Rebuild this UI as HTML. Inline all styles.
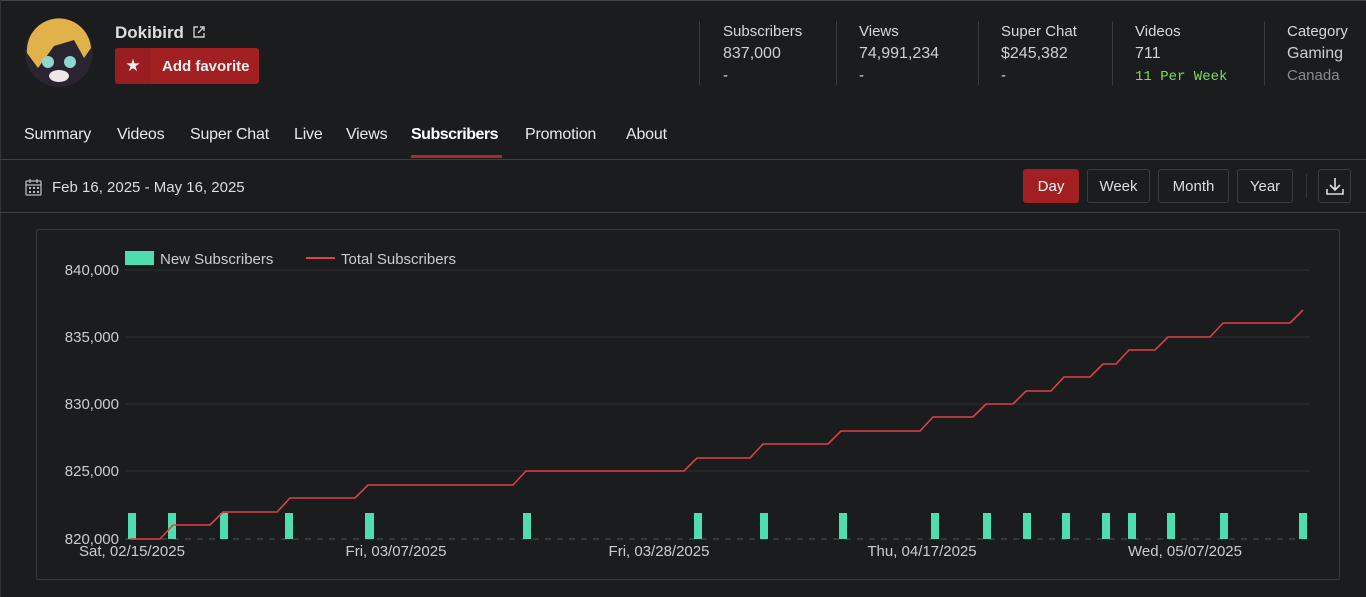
<!DOCTYPE html>
<html><head><meta charset="utf-8"><style>
*{margin:0;padding:0;box-sizing:border-box}
body{width:1366px;height:597px;background:#1b1c1e;font-family:"Liberation Sans",sans-serif;color:#e6e6e6;position:relative;overflow:hidden}
.a{position:absolute}
.stat{position:absolute;top:21px;font-size:15px;line-height:22px;color:#d8d8d8}
.stat .v{color:#cfcfcf;font-size:16px}
.sep{position:absolute;top:21px;width:1px;height:64px;background:#3a3b3d}
.tab{position:absolute;top:126px;font-size:16px;color:#e8e8e8;letter-spacing:-0.2px}
.btn{position:absolute;top:169px;height:34px;border:1px solid #3b3c3f;border-radius:3px;font-size:15px;line-height:34px;text-align:center;color:#ddd}
</style></head><body>
<div class="a" style="left:0;top:0;width:1366px;height:1px;background:#444"></div>
<div class="a" style="left:0;top:0;width:1px;height:597px;background:#333"></div>
<svg class="a" style="left:24px;top:18px" width="70" height="70"><circle cx="35" cy="35" r="34" fill="#2a2430"/><path d="M3 35 A32 32 0 0 1 67 30 L60 40 L50 22 L30 28 L14 50 Z" fill="#e2b24a"/><circle cx="24" cy="44" r="6" fill="#8fd6cf"/><circle cx="46" cy="44" r="6" fill="#8fd6cf"/><ellipse cx="35" cy="58" rx="10" ry="6" fill="#f0e6e6"/></svg>
<div class="a" style="left:115px;top:23px;font-size:17px;font-weight:bold;color:#ddd">Dokibird</div>
<svg class="a" style="left:192px;top:25px" width="14" height="14" fill="none" stroke="#ccc" stroke-width="1.4"><path d="M6 2H2v10h10V8M8 2h4v4M12 2L6 8"/></svg>
<div class="a" style="left:115px;top:48px;width:144px;height:36px;background:#a21f22;border-radius:3px"></div>
<div class="a" style="left:115px;top:48px;width:36px;height:36px;background:#9a1e21;border-radius:3px 0 0 3px;color:#eee;font-size:17px;text-align:center;line-height:36px">★</div>
<div class="a" style="left:162px;top:58px;font-size:15px;font-weight:bold;color:#f0f0f0">Add favorite</div>
<div class="sep" style="left:699px"></div><div class="sep" style="left:836px"></div><div class="sep" style="left:978px"></div><div class="sep" style="left:1112px"></div><div class="sep" style="left:1264px"></div>
<div class="stat" style="left:723px">Subscribers<br><span class="v">837,000</span><br>-</div>
<div class="stat" style="left:859px">Views<br><span class="v">74,991,234</span><br>-</div>
<div class="stat" style="left:1001px">Super Chat<br><span class="v">$245,382</span><br>-</div>
<div class="stat" style="left:1135px">Videos<br><span class="v">711</span><br><span style="font-family:'Liberation Mono',monospace;font-size:14px;color:#7bdc5a">11 Per Week</span></div>
<div class="stat" style="left:1287px">Category<br><span class="v">Gaming</span><br><span style="color:#8a8a8a;font-size:15px">Canada</span></div>
<div class="tab" style="left:24px">Summary</div><div class="tab" style="left:117px">Videos</div><div class="tab" style="left:190px">Super Chat</div><div class="tab" style="left:294px">Live</div><div class="tab" style="left:346px">Views</div><div class="tab" style="left:411px;font-weight:bold;color:#fff;letter-spacing:-0.5px">Subscribers</div><div class="tab" style="left:525px">Promotion</div><div class="tab" style="left:626px">About</div>
<div class="a" style="left:411px;top:155px;width:91px;height:3px;background:#b3262a"></div>
<div class="a" style="left:0;top:159px;width:1366px;height:1px;background:#3e3f42"></div>
<svg class="a" style="left:25px;top:178px" width="18" height="18" fill="none" stroke="#bbb" stroke-width="1.3"><rect x="1" y="3" width="15" height="14" rx="1"/><path d="M1 7h15M5 1v4M12 1v4"/><g fill="#bbb" stroke="none"><rect x="4" y="9" width="2" height="2"/><rect x="8" y="9" width="2" height="2"/><rect x="12" y="9" width="2" height="2"/><rect x="4" y="13" width="2" height="2"/><rect x="8" y="13" width="2" height="2"/><rect x="12" y="13" width="2" height="2"/></g></svg>
<div class="a" style="left:52px;top:179px;font-size:15px;color:#ddd">Feb 16, 2025 - May 16, 2025</div>
<div class="btn" style="left:1023px;width:56px;background:#a21f22;border-color:#a21f22;color:#f3f3f3">Day</div>
<div class="btn" style="left:1087px;width:63px">Week</div>
<div class="btn" style="left:1158px;width:71px">Month</div>
<div class="btn" style="left:1237px;width:56px">Year</div>
<div class="a" style="left:1306px;top:174px;width:1px;height:24px;background:#333"></div>
<div class="btn" style="left:1318px;width:33px"></div>
<svg class="a" style="left:1325px;top:176px" width="20" height="20" fill="none" stroke="#ddd" stroke-width="1.6"><path d="M10 2v11M5 9l5 5 5-5M2 13v5h16v-5"/></svg>
<div class="a" style="left:0;top:212px;width:1366px;height:1px;background:#3e3f42"></div>
<div class="a" style="left:36px;top:229px;width:1304px;height:351px;border:1px solid #3a3b3e;border-radius:3px"></div>
<svg class="a" style="left:0;top:0" width="1366" height="597" font-family="Liberation Sans,sans-serif">
<rect x="125" y="251" width="29" height="14" fill="#4fdcb0"/>
<text x="160" y="264" font-size="15" fill="#ccc">New Subscribers</text>
<line x1="306" y1="258" x2="335" y2="258" stroke="#e0404a" stroke-width="2"/>
<text x="341" y="264" font-size="15" fill="#ccc">Total Subscribers</text>
<g stroke="#2e2f32"><line x1="125" y1="270" x2="1310" y2="270"/><line x1="125" y1="337" x2="1310" y2="337"/><line x1="125" y1="404" x2="1310" y2="404"/><line x1="125" y1="471" x2="1310" y2="471"/></g>
<g font-size="15" fill="#ccc" text-anchor="end"><text x="119" y="275">840,000</text><text x="119" y="342">835,000</text><text x="119" y="409">830,000</text><text x="119" y="476">825,000</text><text x="119" y="544">820,000</text></g>
<line x1="125" y1="539" x2="1310" y2="539" stroke="#3f5a55" stroke-dasharray="6 6"/>
<g fill="#4fdcb0"><rect x="128" y="513" width="8" height="26"/><rect x="168" y="513" width="8" height="26"/><rect x="220" y="513" width="8" height="26"/><rect x="285" y="513" width="8" height="26"/><rect x="365" y="513" width="9" height="26"/><rect x="523" y="513" width="8" height="26"/><rect x="694" y="513" width="8" height="26"/><rect x="760" y="513" width="8" height="26"/><rect x="839" y="513" width="8" height="26"/><rect x="931" y="513" width="8" height="26"/><rect x="983" y="513" width="8" height="26"/><rect x="1023" y="513" width="8" height="26"/><rect x="1062" y="513" width="8" height="26"/><rect x="1102" y="513" width="8" height="26"/><rect x="1128" y="513" width="8" height="26"/><rect x="1167" y="513" width="8" height="26"/><rect x="1220" y="513" width="8" height="26"/><rect x="1299" y="513" width="8" height="26"/></g>
<polyline fill="none" stroke="#e0404a" stroke-width="1.6" points="130,539 160,539 173,525 210,525 223,512 277,512 290,498 355,498 368,485 513,485 526,471 684,471 697,458 750,458 763,444 828,444 841,431 920,431 933,417 973,417 986,404 1013,404 1026,391 1051,391 1064,377 1090,377 1103,364 1116,364 1129,350 1155,350 1168,337 1210,337 1223,323 1290,323 1303,310"/>
<g font-size="15" fill="#ccc" text-anchor="middle"><text x="132" y="556">Sat, 02/15/2025</text><text x="396" y="556">Fri, 03/07/2025</text><text x="659" y="556">Fri, 03/28/2025</text><text x="922" y="556">Thu, 04/17/2025</text><text x="1185" y="556">Wed, 05/07/2025</text></g>
</svg>
</body></html>
